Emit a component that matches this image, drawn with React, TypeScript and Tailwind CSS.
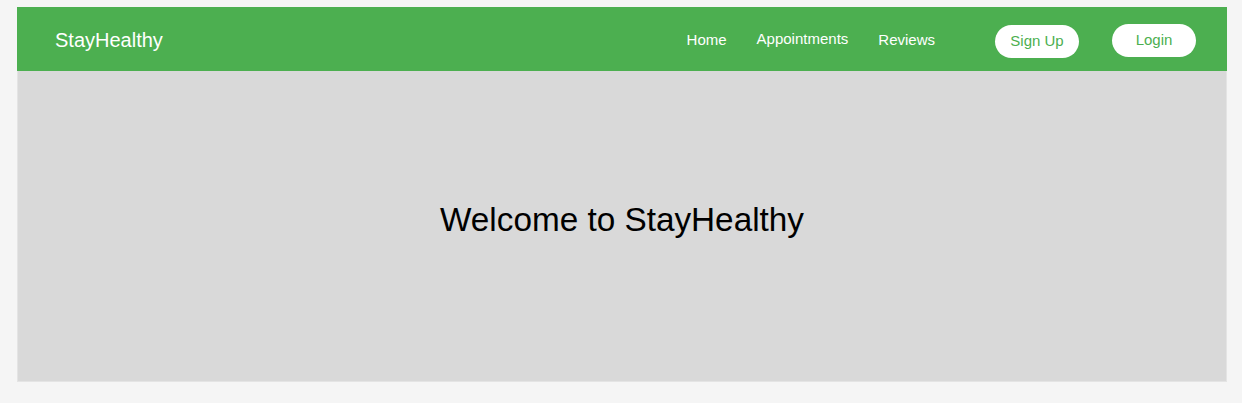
import React from 'react';

const links = ['Home', 'Appointments', 'Reviews'];

export default function App() {
  return (
    <div className="min-h-screen w-full bg-[#f5f5f5] pt-[7px] pl-[17px] font-['Liberation_Sans',Arial,sans-serif]">
      <div className="w-[1210px]">
        {/* Navbar */}
        <nav className="flex h-[64px] items-center bg-[#4caf50] pl-[38px] pr-[31px]">
          <div className="mt-[1px] text-[20px] leading-none text-white">StayHealthy</div>
          <ul className="ml-auto mt-[3px] flex items-center gap-[30px] text-[15px] text-white">
            {links.map((l) => (
              <li key={l} className={l === 'Appointments' ? '-mt-[2px]' : ''}>
                {l}
              </li>
            ))}
          </ul>
          <button className="ml-[60px] mt-[5px] h-[33px] w-[84px] rounded-full bg-white text-[15px] text-[#4caf50]">
            Sign Up
          </button>
          <button className="ml-[33px] mt-[3px] h-[33px] w-[84px] rounded-full bg-white text-[15px] text-[#4caf50]">
            Login
          </button>
        </nav>

        {/* Hero */}
        <section className="h-[311px] border border-t-0 border-[#e4e4e4] bg-[#d9d9d9] pt-[130px] text-center">
          <h1 className="text-[33.3px] leading-[1.15] text-black">Welcome to StayHealthy</h1>
        </section>
      </div>
    </div>
  );
}
